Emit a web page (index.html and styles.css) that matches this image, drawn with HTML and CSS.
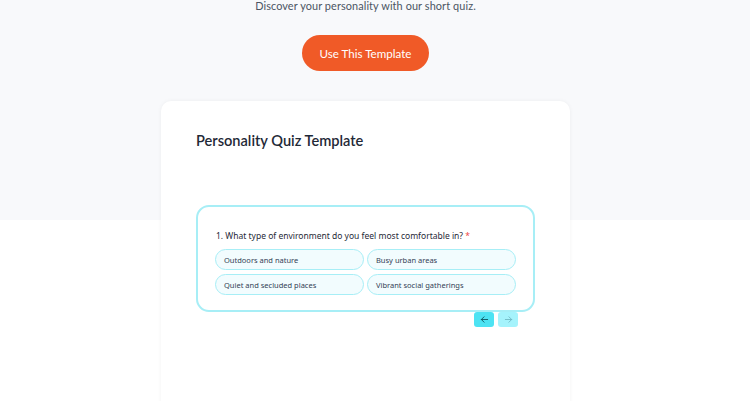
FILE: index.html
```html
<!DOCTYPE html>
<html>
  <head>
    <link rel="stylesheet" href="styles.css">
  </head>
  <body>
    <div class="page">
      <div class="intro">
        <p class="lead">Discover your personality with our short quiz.</p>
        <a class="cta" href="#">Use This Template</a>
      </div>
      <div class="card">
        <h1>Personality Quiz Template</h1>
        <div class="quiz">
          <div class="question">1. What type of environment do you feel most comfortable in? <span class="req">*</span></div>
          <div class="options">
            <div class="option">Outdoors and nature</div>
            <div class="option">Busy urban areas</div>
            <div class="option">Quiet and secluded places</div>
            <div class="option">Vibrant social gatherings</div>
          </div>
        </div>
        <div class="nav">
          <button class="prev">
            <svg width="9" height="9" viewBox="0 0 10 10"><path d="M8.5 5H1.5M4.5 2L1.5 5l3 3" fill="none" stroke="#0e5560" stroke-width="1" stroke-linecap="round" stroke-linejoin="round"/></svg>
          </button>
          <button class="next">
            <svg width="9" height="9" viewBox="0 0 10 10"><path d="M1.5 5h7M5.5 2l3 3-3 3" fill="none" stroke="#6fb9c4" stroke-width="1" stroke-linecap="round" stroke-linejoin="round"/></svg>
          </button>
        </div>
      </div>
    </div>
  </body>
</html>
```

FILE: styles.css
```css
body {
  margin: 0;
  background: linear-gradient(#f8f9fb 220px, #fff 220px);
  font-family: "Lato", sans-serif;
  overflow: hidden;
}
.page {
  display: flex;
  flex-direction: column;
  align-items: center;
  padding-right: 19px;
}
.intro {
  display: flex;
  flex-direction: column;
  align-items: center;
}
.lead {
  margin: 0;
  font-size: 10.9px;
  line-height: 12px;
  color: #4b5563;
  letter-spacing: 0.1px;
}
.cta {
  margin-top: 23px;
  width: 127px;
  height: 36px;
  border-radius: 18px;
  background: #f05a27;
  color: #fff;
  font-size: 11.6px;
  text-decoration: none;
  display: flex;
  align-items: center;
  justify-content: center;
}
.card {
  margin-top: 30px;
  width: 409px;
  height: 320px;
  box-sizing: border-box;
  padding: 31px 35px 0;
  background: #fff;
  border-radius: 10px;
  box-shadow: 0 0 4px rgba(0, 0, 0, 0.05);
}
h1 {
  margin: 0;
  font-size: 14.6px;
  font-weight: 600;
  line-height: 18px;
  color: #1f2937;
}
.quiz {
  margin-top: 55px;
  border: 2px solid #a7eef6;
  border-radius: 13px;
  padding: 23px 17px 15px;
  font-family: "Noto Sans", sans-serif;
}
.question {
  font-size: 8.5px;
  line-height: 12px;
  color: #1f2937;
  padding-left: 1px;
}
.req {
  color: #ef4444;
}
.options {
  margin-top: 7px;
  display: grid;
  grid-template-columns: 1fr 1fr;
  gap: 4px 3px;
}
.option {
  height: 21px;
  box-sizing: border-box;
  border: 1px solid #a7eef6;
  border-radius: 11px;
  background: #f2fcfe;
  font-size: 7.5px;
  color: #334155;
  padding-left: 8px;
  display: flex;
  align-items: center;
}
.nav {
  display: flex;
  justify-content: flex-end;
  gap: 4px;
  padding-right: 17px;
}
.nav button {
  width: 20px;
  height: 15px;
  border: 0;
  border-radius: 3px;
  padding: 0;
  display: flex;
  align-items: center;
  justify-content: center;
}
.prev {
  background: #4de3f3;
}
.next {
  background: #a5f3fc;
}
```
